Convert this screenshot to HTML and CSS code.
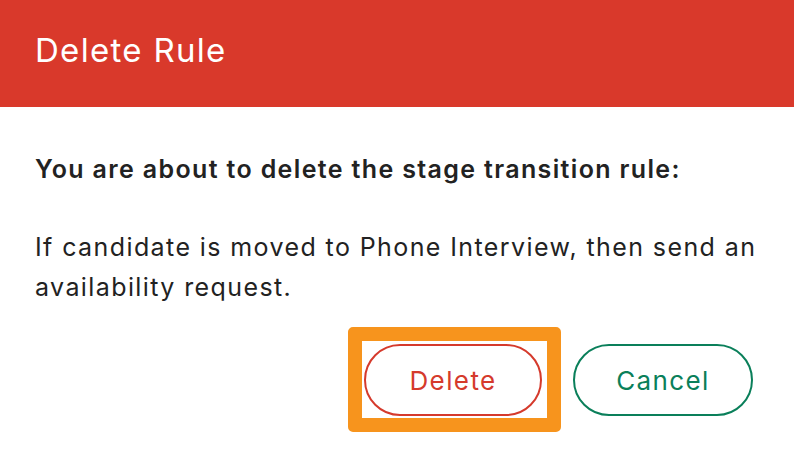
FILE: index.html
```html
<!DOCTYPE html>
<html lang="en">
<head>
  <meta charset="UTF-8">
  <title>Delete Rule</title>
  <link rel="stylesheet" href="styles.css">
</head>
<body>
  <div class="modal">
    <div class="modal-header">Delete Rule</div>
    <div class="modal-body">
      <p class="lead">You are about to delete the stage transition rule:</p>
      <p class="rule">If candidate is moved to Phone Interview, then send an availability request.</p>
      <div class="actions">
        <span class="highlight"><button class="btn btn-delete">Delete</button></span>
        <button class="btn btn-cancel">Cancel</button>
      </div>
    </div>
  </div>
</body>
</html>
```

FILE: styles.css
```css
* { box-sizing: border-box; margin: 0; padding: 0; }
html, body { width: 100%; height: 100%; background: #fff; }
body { font-family: Inter, "Liberation Sans", sans-serif; color: #222; }
/* header */
.modal-header {
  height: 107px; background: #d9392b; color: #fff;
  font-size: 33px; letter-spacing: 1.3px; padding: 30px 35px 0;
}
/* body */
.modal-body { padding: 47px 35px 0; }
.lead { font-size: 25px; font-weight: 600; line-height: 30px; letter-spacing: 1.35px; }
.rule { font-size: 25px; line-height: 40px; margin-top: 43px; letter-spacing: 1.4px; }
.actions {
  display: flex; justify-content: flex-end; gap: 31px;
  margin-top: 37px; padding-right: 6px;
}
.btn {
  width: 178px; height: 72px; border-radius: 36px; background: #fff;
  font-family: inherit; font-size: 26px; letter-spacing: 1.4px; cursor: pointer;
}
.btn-delete { border: 2px solid #d53a2c; color: #d53a2c; }
.btn-cancel { width: 180px; border: 2px solid #0a7f5a; color: #0a7f5a; }
/* orange annotation frame */
.highlight { position: relative; display: inline-block; }
.highlight::after {
  content: ""; position: absolute;
  left: -16px; right: -19px; top: -17px; bottom: -16px;
  border: 14px solid #f7941d; border-radius: 5px; pointer-events: none;
}
```
